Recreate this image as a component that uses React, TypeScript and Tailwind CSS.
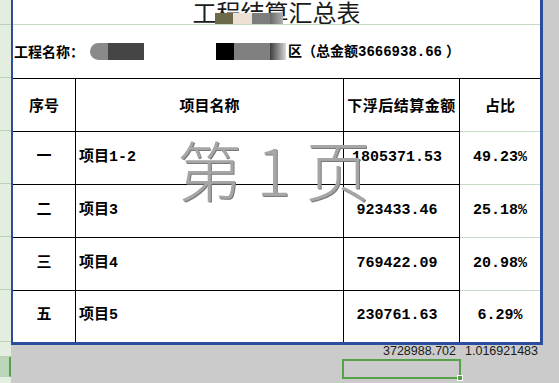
import React from "react";

const mono = "font-['Liberation_Mono','Noto_Sans_CJK_SC',monospace]";
const cjk = "font-['Noto_Sans_CJK_SC',sans-serif]";
const cols = "grid grid-cols-[63px_268px_116px_80px]";

const rows = [
  { no: "一", name: "项目1-2", amt: "1805371.53", pct: "49.23%" },
  { no: "二", name: "项目3", amt: "923433.46", pct: "25.18%" },
  { no: "三", name: "项目4", amt: "769422.09", pct: "20.98%" },
  { no: "五", name: "项目5", amt: "230761.63", pct: "6.29%" },
];

function RowHeader() {
  const hs = [25, 53, 53, 53, 53, 53, 52, 15];
  return (
    <div className="w-[11px] h-[383px] flex flex-col bg-[#e3eee1]">
      {hs.map((h, i) => (
        <div key={i} style={{ height: h }} className="border-b border-[#bccfba] shrink-0" />
      ))}
      <div className="h-[20px] shrink-0 bg-[#bcd6b9] border-r-2 border-[#5aa04c] border-b border-b-[#bccfba]" />
      <div className="flex-1" />
    </div>
  );
}

export default function App() {
  return (
    <div className="relative w-[559px] h-[383px] overflow-hidden bg-[#cbcbcb] flex">
      <RowHeader />
      <div className="w-[532px] flex flex-col">
        {/* page */}
        <div className="h-[345px] bg-white border-l-2 border-r-[3px] border-b-[3px] border-[#2b4d9c] flex flex-col">
          {/* title */}
          <div className="relative h-[25px] border-b border-[#c9d9c8] flex justify-center overflow-hidden">
            <div className={`text-[24px] leading-[24px] text-[#1a1a1a] ${cjk}`}>
              工程结算汇总表
            </div>
            <div className="absolute top-[13px] left-[202px] h-[11px] flex">
              <div className="w-[18px] bg-[#6d6a4b]" />
              <div className="w-[19px] bg-[#efe1d1]" />
              <div className="w-[18px] bg-[#7d7d7d]" />
              <div className="w-[13px] bg-gradient-to-r from-[#6a6a6a] to-[#b0b0b0]" />
            </div>
          </div>
          {/* project name row */}
          <div className={`h-[53px] flex items-center text-[14px] font-bold text-black ${cjk}`}>
            <div className="w-[77px] pl-[1px]">工程名称：</div>
            <div className="w-[18px] h-[17px] rounded-l-full bg-[#8a8a8a]" />
            <div className="w-[36px] h-[17px] bg-[#454545]" />
            <div className="w-[72px]" />
            <div className="w-[18px] h-[17px] bg-black" />
            <div className="w-[36px] h-[17px] bg-[#808080]" />
            <div className="w-[16px] h-[17px] bg-gradient-to-r from-[#404040] to-[#d8d8d8]" />
            <div className="pl-[2px] whitespace-nowrap">
              区（总金额<span className={`text-[14px] ${mono}`}>3666938.66</span>
              <span className="ml-[4px]">）</span>
            </div>
          </div>
          {/* header */}
          <div className={`${cols} h-[53px] text-[15px] font-bold text-black ${cjk}`}>
            <div className="border-t border-r border-black flex items-center justify-center">序号</div>
            <div className="border-t border-r border-black flex items-center justify-center">项目名称</div>
            <div className="border-t border-r border-black flex items-center justify-center whitespace-nowrap tracking-[0.5px]">下浮后结算金额</div>
            <div className="border-t border-black flex items-center justify-center">占比</div>
          </div>
          {rows.map((r, i) => (
            <div
              key={i}
              className={`${cols} ${i === 3 ? "h-[52px]" : "h-[53px]"} text-[15px] font-bold text-black ${mono}`}
            >
              <div className="border-t border-r border-black flex items-center justify-center">{r.no}</div>
              <div className="border-t border-r border-black flex items-center pl-[3px]">{r.name}</div>
              <div className="border-t border-r border-black flex items-center justify-center pr-[9px]">{r.amt}</div>
              <div className="border-t border-[#c6dcc6] flex items-center justify-center">{r.pct}</div>
            </div>
          ))}
        </div>
        {/* below page */}
        <div className={`${cols} pl-[2px] h-[13px] text-[12.5px] leading-[13px] text-[#1a1a1a] font-['Liberation_Sans',sans-serif]`}>
          <div />
          <div />
          <div className="text-right pr-[4px]">3728988.702</div>
          <div className="text-right pr-[2px]">1.016921483</div>
        </div>
        <div className="ml-[331px] mt-[1px] w-[119px] h-[20px] border-2 border-[#55a048] relative">
          <div className="absolute -right-[4px] -bottom-[4px] w-[6px] h-[6px] bg-[#55a048] border border-white" />
        </div>
      </div>
      <div className="flex-1" />
      {/* watermark */}
      <div className={`absolute left-[177px] top-[133px] text-[65px] leading-[70px] text-[#a6a6a6] ${cjk} font-light whitespace-nowrap [text-shadow:1px_1px_0_#7a7a7a] pointer-events-none`}>
        第 1 页
      </div>
    </div>
  );
}
